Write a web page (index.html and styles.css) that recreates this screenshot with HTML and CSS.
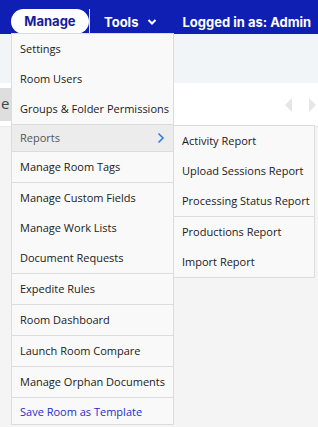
FILE: index.html
```html
<!DOCTYPE html>
<html lang="en">
<head>
    <meta charset="UTF-8">
    <title>Room - Manage</title>
    <link rel="stylesheet" href="styles.css">
</head>
<body>
    <!-- top bar -->
    <header class="topbar">
        <div class="nav-item manage">
            <span class="pill">Manage</span>

            <!-- manage dropdown -->
            <ul class="dropdown">
                <li>Settings</li>
                <li>Room Users</li>
                <li>Groups &amp; Folder Permissions</li>
                <li class="sep has-sub">
                    <span>Reports</span>
                    <svg class="chev-right" width="8" height="12" viewBox="0 0 8 12"><path d="M1.5 1.5 L6 6 L1.5 10.5" fill="none" stroke="#2f7de1" stroke-width="1.6"/></svg>
                    <ul class="submenu">
                        <li>Activity Report</li>
                        <li>Upload Sessions Report</li>
                        <li>Processing Status Report</li>
                        <li class="sep">Productions Report</li>
                        <li>Import Report</li>
                    </ul>
                </li>
                <li class="sep">Manage Room Tags</li>
                <li class="sep">Manage Custom Fields</li>
                <li>Manage Work Lists</li>
                <li>Document Requests</li>
                <li class="sep">Expedite Rules</li>
                <li class="sep">Room Dashboard</li>
                <li class="sep">Launch Room Compare</li>
                <li class="sep">Manage Orphan Documents</li>
                <li class="sep link">Save Room as Template</li>
            </ul>
        </div>
        <div class="divider"></div>
        <div class="nav-item tools">
            Tools
            <svg width="10" height="8" viewBox="0 0 10 8"><path d="M1.5 2 L5 5.5 L8.5 2" fill="none" stroke="#fff" stroke-width="2"/></svg>
        </div>
        <div class="nav-item user">Logged in as: Admin</div>
    </header>

    <div class="subbar"></div>

    <div class="toolbar">
        <div class="tab">e</div>
        <div class="pager">
            <svg width="8" height="14" viewBox="0 0 8 14"><path d="M7 0 L0 7 L7 14 Z" fill="#e6e6e6"/></svg>
            <svg width="8" height="14" viewBox="0 0 8 14"><path d="M1 0 L8 7 L1 14 Z" fill="#e6e6e6"/></svg>
        </div>
    </div>

    <div class="content"></div>
</body>
</html>
```

FILE: styles.css
```css
* {
    margin: 0;
    padding: 0;
    box-sizing: border-box;
}

html, body {
    height: 100%;
}

body {
    font-family: 'Open Sans', 'Noto Sans', sans-serif;
    background-color: #f4f4f4;
    overflow: hidden;
    display: flex;
    flex-direction: column;
}

/* top bar */
.topbar {
    height: 34px;
    background: #0f1fb3;
    display: flex;
    align-items: flex-end;
    padding-left: 11px;
    font-family: 'Inter', 'Liberation Sans', sans-serif;
    font-weight: 700;
    font-size: 13px;
    color: #fff;
    position: relative;
    z-index: 5;
}

.nav-item {
    height: 25px;
    display: flex;
    align-items: center;
}

.manage {
    position: relative;
}

.pill {
    display: block;
    width: 78px;
    height: 25px;
    line-height: 25px;
    text-align: center;
    background: #fff;
    color: #16209a;
    border-radius: 13px;
}

.divider {
    width: 1px;
    height: 25px;
    background: rgba(255,255,255,0.85);
}

.tools {
    padding-left: 14px;
    gap: 9px;
}

.user {
    padding-left: 25px;
    white-space: nowrap;
}

/* page areas */
.subbar {
    height: 49px;
    background: #f2f5f8;
}

.toolbar {
    height: 44px;
    background: #fff;
    display: flex;
    align-items: center;
    justify-content: space-between;
    border-bottom: 1px solid #e8e8e8;
}

.tab {
    width: 11px;
    height: 33px;
    background: #dedede;
    font-family: 'Open Sans', sans-serif;
    font-size: 15px;
    color: #444;
    line-height: 31px;
    padding-left: 1px;
}

.pager {
    display: flex;
    gap: 15px;
    padding-right: 2px;
}

.content {
    flex: 1;
}

/* dropdown */
.dropdown {
    position: absolute;
    top: 24px;
    left: 0;
    width: 163px;
    list-style: none;
    background: #f9f9f9;
    border: 1px solid #dcdcdc;
    font-family: 'Open Sans', 'Noto Sans', sans-serif;
    font-weight: 400;
    font-size: 11px;
    color: #1a1a1a;
}

.dropdown li {
    height: 30px;
    line-height: 30px;
    padding-left: 8px;
    white-space: nowrap;
}

.dropdown li.sep {
    border-top: 1px solid #dcdcdc;
    height: 31px;
}

.dropdown li.has-sub {
    position: relative;
    height: 27px;
    background: #ececec;
    color: #555;
    display: flex;
    align-items: center;
    justify-content: space-between;
    padding-right: 8px;
}

.dropdown li.link {
    height: 27px;
    line-height: 27px;
    color: #1f2fc4;
}

.submenu {
    position: absolute;
    top: 0;
    left: 161px;
    width: 142px;
    list-style: none;
    background: #f9f9f9;
    border: 1px solid #dcdcdc;
    color: #1a1a1a;
}

.dropdown .submenu li {
    padding-left: 8px;
}
```
